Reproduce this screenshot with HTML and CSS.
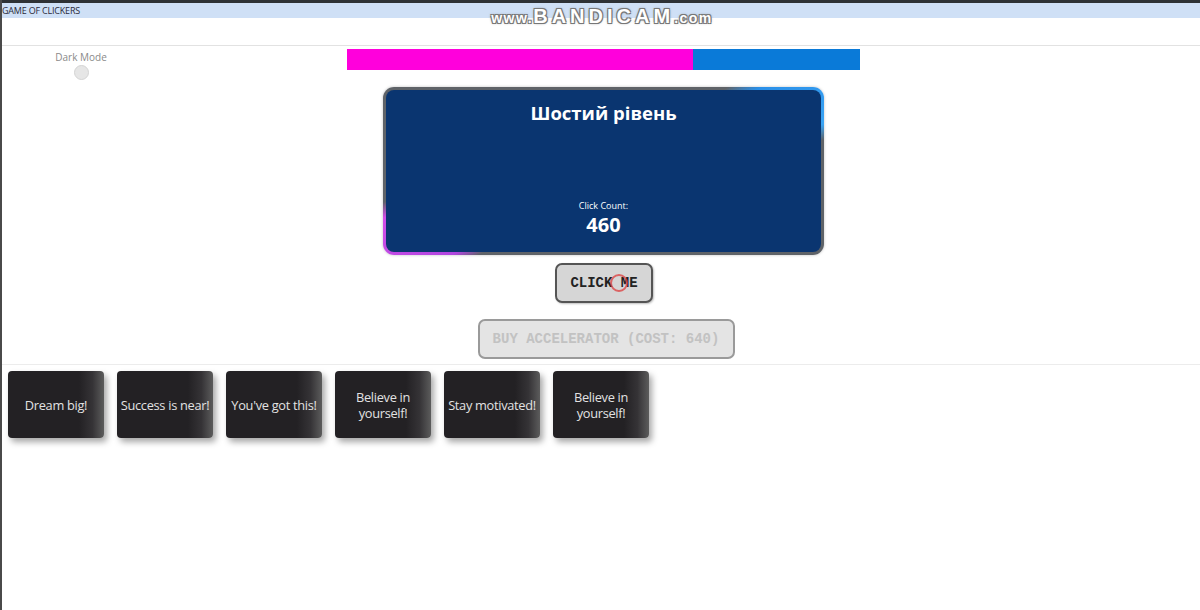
FILE: index.html
```html
<!DOCTYPE html>
<html lang="uk">
<head>
<meta charset="utf-8">
<title>GAME OF CLICKERS</title>
<link rel="stylesheet" href="styles.css">
</head>
<body>
<div class="window">
  <div class="titlebar">GAME OF CLICKERS</div>
  <div class="watermark"><span class="wm-small">www.</span>BANDICAM<span class="wm-small">.com</span></div>
  <div class="header-space"></div>
  <main class="main">
    <div class="top-row">
      <div class="dark-mode">
        <div class="dm-label">Dark Mode</div>
        <div class="dm-toggle"></div>
      </div>
      <div class="progress">
        <div class="progress-fill" style="width: 67.5%"></div>
      </div>
      <div></div>
    </div>
    <section class="level-card">
      <h1 class="level-title">Шостий рівень</h1>
      <div class="count-block">
        <div class="count-label">Click Count:</div>
        <div class="count-value">460</div>
      </div>
    </section>
    <button class="btn btn-click">CLICK ME<span class="cursor-ring"></span></button>
    <button class="btn btn-buy" disabled>BUY ACCELERATOR (COST: 640)</button>
  </main>
  <div class="quotes">
    <div class="quote">Dream big!</div>
    <div class="quote">Success is near!</div>
    <div class="quote">You've got this!</div>
    <div class="quote">Believe in yourself!</div>
    <div class="quote">Stay motivated!</div>
    <div class="quote">Believe in yourself!</div>
  </div>
</div>
</body>
</html>
```

FILE: styles.css
```css
html, body {
  margin: 0;
  padding: 0;
  background: #ffffff;
}

body {
  font-family: "Open Sans", "Noto Sans", sans-serif;
  width: 1200px;
  height: 610px;
  overflow: hidden;
}

.window {
  position: relative;
  height: 610px;
  border-left: 2px solid #4a4a4a;
  box-sizing: border-box;
}

.titlebar {
  height: 15px;
  border-top: 3px solid #2e3236;
  background: #cfe0f6;
  font-size: 9px;
  line-height: 15px;
  color: #2a2a3a;
  letter-spacing: -0.2px;
}

.watermark {
  position: absolute;
  top: 5px;
  left: 476px;
  width: 248px;
  text-align: center;
  font-family: "Liberation Sans", Arial, sans-serif;
  font-weight: bold;
  font-size: 20px;
  line-height: 22px;
  letter-spacing: 4px;
  color: #ffffff;
  text-shadow: -1px -1px 0 #777, 1px -1px 0 #777, -1px 1px 0 #777, 1px 1px 0 #777, 0 0 3px #666;
  white-space: nowrap;
}

.wm-small {
  font-size: 14px;
  letter-spacing: 1.5px;
}

.header-space {
  height: 27px;
  border-bottom: 1px solid #e2e2e2;
}

.main {
  padding-left: 5px;
  display: flex;
  flex-direction: column;
  align-items: center;
}

.top-row {
  align-self: stretch;
  display: grid;
  grid-template-columns: 1fr 513px 1fr;
  align-items: start;
  padding-top: 3px;
}

.dark-mode {
  width: 148px;
  display: flex;
  flex-direction: column;
  align-items: center;
  padding-top: 2px;
}

.dm-label {
  font-size: 10px;
  line-height: 12px;
  color: #8a8a8a;
}

.dm-toggle {
  width: 13px;
  height: 13px;
  margin-top: 2px;
  border-radius: 50%;
  background: #e6e6e6;
  border: 1px solid #d4d4d4;
}

.progress {
  height: 21px;
  background: #0a7ad8;
}

.progress-fill {
  height: 100%;
  background: #ff00dc;
}

.level-card {
  margin-top: 7px;
  width: 441px;
  height: 168px;
  box-sizing: border-box;
  border: 3px solid transparent;
  border-radius: 11px;
  background:
    linear-gradient(#0a3570, #0a3570) padding-box,
    conic-gradient(from 0deg,
      #5f6368 0deg, #5f6368 56deg,
      #2a8fe8 62deg, #3aa4f4 78deg,
      #5f6368 82deg, #5f6368 236deg,
      #b046e0 241deg, #d24ee8 258deg,
      #5f6368 262deg, #5f6368 360deg) border-box;
  box-shadow: 0 0 3px rgba(0, 0, 0, 0.25);
  display: flex;
  flex-direction: column;
  justify-content: space-between;
  align-items: center;
  padding: 11px 0 14px;
  color: #ffffff;
}

.level-title {
  margin: 0;
  font-size: 18.5px;
  font-weight: 700;
  line-height: 24px;
}

.count-block {
  display: flex;
  flex-direction: column;
  align-items: center;
}

.count-label {
  font-size: 9px;
  line-height: 12px;
}

.count-value {
  font-size: 20px;
  font-weight: 700;
  line-height: 26px;
}

.btn {
  font-family: "Liberation Mono", "DejaVu Sans Mono", monospace;
  font-size: 14px;
  border-radius: 7px;
  box-sizing: border-box;
}

.btn-click {
  position: relative;
  margin-top: 8px;
  margin-left: 1px;
  width: 98px;
  height: 40px;
  background: #d6d6d6;
  border: 2px solid #555555;
  color: #222222;
  font-weight: bold;
  box-shadow: 1px 1px 2px rgba(0, 0, 0, 0.25);
}

.cursor-ring {
  position: absolute;
  left: 53px;
  top: 9px;
  width: 14px;
  height: 14px;
  border: 2px solid rgba(220, 60, 60, 0.75);
  border-radius: 50%;
}

.btn-buy {
  margin-top: 16px;
  margin-left: 5px;
  width: 257px;
  height: 40px;
  background: #e4e4e4;
  border: 2px solid #9a9a9a;
  color: #c2c2c2;
  font-weight: bold;
}

.quotes {
  margin-top: 5px;
  border-top: 1px solid #ececec;
  padding: 6px 0 0 6px;
  display: flex;
  gap: 13px;
}

.quote {
  width: 96px;
  height: 67px;
  box-sizing: border-box;
  padding: 0 2px;
  border-radius: 4px;
  background: linear-gradient(90deg, #232124 0%, #232124 74%, #353336 88%, #5c5c5c 100%);
  box-shadow: 3px 4px 6px rgba(0, 0, 0, 0.35);
  color: #e2e2e2;
  font-size: 12.8px;
  line-height: 16px;
  display: flex;
  align-items: center;
  justify-content: center;
  text-align: center;
  letter-spacing: -0.3px;
}
```
